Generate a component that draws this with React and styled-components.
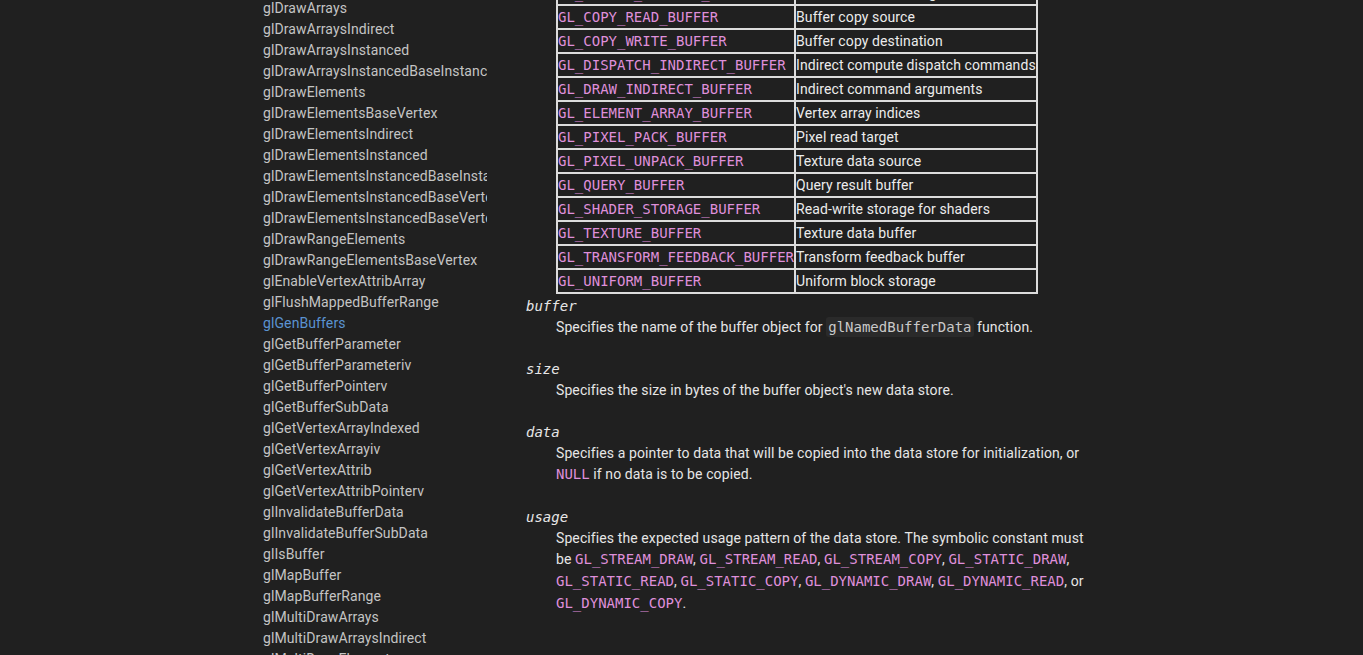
import React from "react";
import styled, { createGlobalStyle } from "styled-components";

const GlobalStyle = createGlobalStyle`
  html, body {
    margin: 0;
    padding: 0;
    background: #202020;
    height: 100%;
    overflow: hidden;
  }
  body {
    font-family: Roboto, "Liberation Sans", sans-serif;
    font-size: 14px;
    letter-spacing: 0.1px;
    color: #e6e6e6;
  }
`;

const Page = styled.div`
  display: flex;
  align-items: flex-start;
  gap: 39px;
  padding-left: 263px;
  height: 100vh;
  overflow: hidden;
`;

const Sidebar = styled.ul`
  list-style: none;
  margin: -2px 0 0;
  padding: 0;
  width: 224px;
  flex-shrink: 0;
  overflow: hidden;
`;

const NavItem = styled.li`
  white-space: nowrap;
  line-height: 21px;
  color: ${(p) => (p.$active ? "#5b93d1" : "#c4c4c4")};
`;

const Main = styled.div`
  width: 570px;
  margin-top: -20px;
`;

const Params = styled.dl`
  margin: 0;
`;

const Term = styled.dt`
  font-family: "DejaVu Sans Mono", "Liberation Mono", monospace;
  font-style: italic;
  font-size: 14px;
  letter-spacing: 0;
  line-height: 21px;
  color: #e6e6e6;
`;

const Desc = styled.dd`
  margin: 0 0 ${(p) => p.$gap ?? 21}px 30px;
  width: 532px;
  line-height: ${(p) => p.$lh ?? 21.5}px;
`;

const Table = styled.table`
  border-collapse: separate;
  border-spacing: 0;
  border-top: 2px solid #dcdcdc;
  border-left: 2px solid #dcdcdc;
`;

const Cell = styled.td`
  padding: 0;
  height: 22px;
  line-height: 22px;
  border-right: 2px solid #dcdcdc;
  border-bottom: 2px solid #dcdcdc;
  white-space: nowrap;
  color: #ececec;
`;

const Const = styled.code`
  font-family: "DejaVu Sans Mono", "Liberation Mono", monospace;
  font-size: 14px;
  letter-spacing: 0;
  color: #df8fda;
`;

const Code = styled.code`
  font-family: "DejaVu Sans Mono", "Liberation Mono", monospace;
  font-size: 14px;
  letter-spacing: 0;
  color: #c9c9c9;
  background: #2a2a2a;
  padding: 2px 2px;
  border-radius: 3px;
`;

const navItems = [
  "glDrawArrays",
  "glDrawArraysIndirect",
  "glDrawArraysInstanced",
  "glDrawArraysInstancedBaseInstance",
  "glDrawElements",
  "glDrawElementsBaseVertex",
  "glDrawElementsIndirect",
  "glDrawElementsInstanced",
  "glDrawElementsInstancedBaseInstance",
  "glDrawElementsInstancedBaseVertex",
  "glDrawElementsInstancedBaseVertexBaseInstance",
  "glDrawRangeElements",
  "glDrawRangeElementsBaseVertex",
  "glEnableVertexAttribArray",
  "glFlushMappedBufferRange",
  "glGenBuffers",
  "glGetBufferParameter",
  "glGetBufferParameteriv",
  "glGetBufferPointerv",
  "glGetBufferSubData",
  "glGetVertexArrayIndexed",
  "glGetVertexArrayiv",
  "glGetVertexAttrib",
  "glGetVertexAttribPointerv",
  "glInvalidateBufferData",
  "glInvalidateBufferSubData",
  "glIsBuffer",
  "glMapBuffer",
  "glMapBufferRange",
  "glMultiDrawArrays",
  "glMultiDrawArraysIndirect",
  "glMultiDrawElements",
];

const targets = [
  ["GL_ATOMIC_COUNTER_BUFFER", "Atomic counter storage"],
  ["GL_COPY_READ_BUFFER", "Buffer copy source"],
  ["GL_COPY_WRITE_BUFFER", "Buffer copy destination"],
  ["GL_DISPATCH_INDIRECT_BUFFER", "Indirect compute dispatch commands"],
  ["GL_DRAW_INDIRECT_BUFFER", "Indirect command arguments"],
  ["GL_ELEMENT_ARRAY_BUFFER", "Vertex array indices"],
  ["GL_PIXEL_PACK_BUFFER", "Pixel read target"],
  ["GL_PIXEL_UNPACK_BUFFER", "Texture data source"],
  ["GL_QUERY_BUFFER", "Query result buffer"],
  ["GL_SHADER_STORAGE_BUFFER", "Read-write storage for shaders"],
  ["GL_TEXTURE_BUFFER", "Texture data buffer"],
  ["GL_TRANSFORM_FEEDBACK_BUFFER", "Transform feedback buffer"],
  ["GL_UNIFORM_BUFFER", "Uniform block storage"],
];

const App = () => {
  return (
    <>
      <GlobalStyle />
      <Page>
        <Sidebar>
          {navItems.map((name) => (
            <NavItem key={name} $active={name === "glGenBuffers"}>
              {name}
            </NavItem>
          ))}
        </Sidebar>
        <Main>
          <Params>
            <Desc $gap={1.5}>
              <Table>
                <tbody>
                  {targets.map(([k, v]) => (
                    <tr key={k}>
                      <Cell>
                        <Const>{k}</Const>
                      </Cell>
                      <Cell>{v}</Cell>
                    </tr>
                  ))}
                </tbody>
              </Table>
            </Desc>
            <Term>buffer</Term>
            <Desc $gap={20.5}>
              Specifies the name of the buffer object for <Code>glNamedBufferData</Code> function.
            </Desc>
            <Term>size</Term>
            <Desc $lh={21}>Specifies the size in bytes of the buffer object's new data store.</Desc>
            <Term>data</Term>
            <Desc $lh={21} $gap={22}>
              Specifies a pointer to data that will be copied into the data store for initialization, or{" "}
              <Const>NULL</Const> if no data is to be copied.
            </Desc>
            <Term>usage</Term>
            <Desc $lh={21.7}>
              Specifies the expected usage pattern of the data store. The symbolic constant must be{" "}
              <Const>GL_STREAM_DRAW</Const>, <Const>GL_STREAM_READ</Const>, <Const>GL_STREAM_COPY</Const>,{" "}
              <Const>GL_STATIC_DRAW</Const>, <Const>GL_STATIC_READ</Const>, <Const>GL_STATIC_COPY</Const>,{" "}
              <Const>GL_DYNAMIC_DRAW</Const>, <Const>GL_DYNAMIC_READ</Const>, or <Const>GL_DYNAMIC_COPY</Const>.
            </Desc>
          </Params>
        </Main>
      </Page>
    </>
  );
};

export default App;
